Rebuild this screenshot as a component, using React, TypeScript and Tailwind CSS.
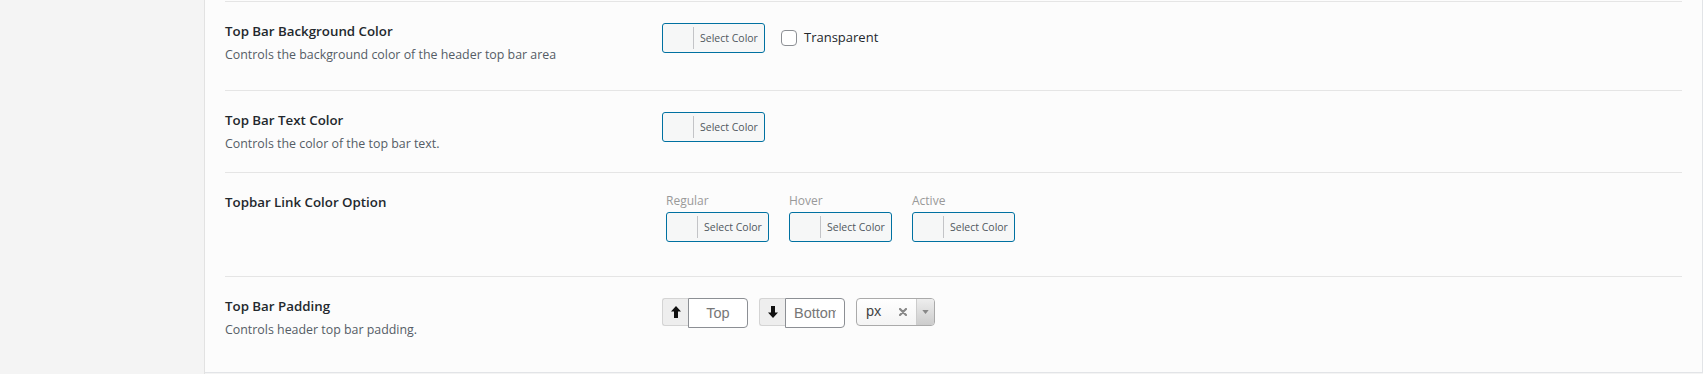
import React from 'react';

const font = { fontFamily: '"Open Sans", "Noto Sans", sans-serif' };

const ColorButton: React.FC = () => (
  <button
    type="button"
    className="flex items-center h-[30px] w-[103px] rounded-[3px] border border-[#0071a1] bg-[#f6f7f7] pl-[30px] pr-[6px]"
  >
    <span className="h-[22px] w-px bg-[#c3c4c7]" />
    <span className="ml-[6px] text-[10.5px] leading-none text-[#50575e] whitespace-nowrap">Select Color</span>
  </button>
);

const ArrowUp = () => (
  <svg viewBox="0 0 10 12" className="h-[12px] w-[10px]">
    <path d="M5 0 L10 5.5 H7 V12 H3 V5.5 H0 Z" fill="#111" />
  </svg>
);

const ArrowDown = () => (
  <svg viewBox="0 0 10 12" className="h-[12px] w-[10px]">
    <path d="M5 12 L10 6.5 H7 V0 H3 V6.5 H0 Z" fill="#111" />
  </svg>
);

const PaddingInput: React.FC<{ icon: React.ReactNode; placeholder: string }> = ({ icon, placeholder }) => (
  <div className="flex items-start">
    <span className="flex h-[28px] w-[26px] items-center justify-center rounded-l-[3px] border border-r-0 border-[#d4d4d4] bg-[#eeeeee]">
      {icon}
    </span>
    <input
      readOnly
      placeholder={placeholder}
      className="h-[30px] w-[60px] rounded-r-[4px] border border-[#8c8f94] bg-white px-[8px] text-center text-[14.5px] text-[#555] placeholder:text-[#777] outline-none"
      style={{ fontFamily: '"Liberation Sans", Arial, sans-serif' }}
    />
  </div>
);

const UnitSelect: React.FC = () => (
  <div
    className="flex h-[28px] w-[79px] overflow-hidden rounded-[4px] border border-[#aaaaaa] bg-gradient-to-b from-white to-[#f4f4f4]"
    style={{ fontFamily: '"Liberation Sans", Arial, sans-serif' }}
  >
    <span className="flex flex-1 items-center pl-[9px] text-[14.5px] text-[#444]">px</span>
    <span className="flex items-center pr-[9px]">
      <svg viewBox="0 0 8 8" className="h-[8px] w-[8px]">
        <path d="M1 1 L7 7 M7 1 L1 7" stroke="#888" strokeWidth="2.2" strokeLinecap="round" />
      </svg>
    </span>
    <span className="flex w-[18px] items-center justify-center border-l border-[#cccccc] bg-gradient-to-b from-[#eeeeee] to-[#cccccc]">
      <svg viewBox="0 0 8 5" className="h-[4px] w-[7px]">
        <path d="M0 0 H8 L4 5 Z" fill="#888" />
      </svg>
    </span>
  </div>
);

const Row: React.FC<{
  title: string;
  desc?: string;
  height: string;
  children: React.ReactNode;
}> = ({ title, desc, height, children }) => (
  <div className={`flex border-t border-[#e5e5e5] ${height}`}>
    <div className="w-[437px] shrink-0 pt-[19px]">
      <h3 className="text-[13.3px] font-semibold leading-[20px] text-[#23282d]">{title}</h3>
      {desc && <p className="mt-[4px] text-[12.4px] leading-[20px] text-[#555d66]">{desc}</p>}
    </div>
    <div className="flex-1 pt-[21px]">{children}</div>
  </div>
);

export default function App() {
  return (
    <div className="flex h-[374px] w-full bg-[#f4f4f4]" style={font}>
      <aside className="w-[205px] shrink-0 border-r border-[#e2e2e2] bg-[#f4f4f4]" />
      <main className="h-[373px] flex-1 border-r border-b border-[#e2e4e7] bg-[#fcfcfc] px-[20px] pt-px">
        <Row title="Top Bar Background Color" desc="Controls the background color of the header top bar area" height="h-[89px]">
          <div className="flex items-center gap-[16px]">
            <ColorButton />
            <label className="flex items-center gap-[7px]">
              <span className="h-[16px] w-[16px] rounded-[4px] border border-[#8c8f94] bg-white" />
              <span className="text-[13px] text-[#23282d]">Transparent</span>
            </label>
          </div>
        </Row>
        <Row title="Top Bar Text Color" desc="Controls the color of the top bar text." height="h-[82px]">
          <ColorButton />
        </Row>
        <Row title="Topbar Link Color Option" height="h-[104px]">
          <div className="flex gap-[20px] pl-[4px] -mt-[2px]">
            {['Regular', 'Hover', 'Active'].map(label => (
              <div key={label}>
                <div className="mb-[2px] text-[12px] leading-[18px] text-[#999]">{label}</div>
                <ColorButton />
              </div>
            ))}
          </div>
        </Row>
        <Row title="Top Bar Padding" desc="Controls header top bar padding." height="h-[96px]">
          <div className="flex items-start gap-[11px]">
            <PaddingInput icon={<ArrowUp />} placeholder="Top" />
            <PaddingInput icon={<ArrowDown />} placeholder="Bottom" />
            <UnitSelect />
          </div>
        </Row>
      </main>
      <div className="w-px shrink-0 bg-white" />
    </div>
  );
}
